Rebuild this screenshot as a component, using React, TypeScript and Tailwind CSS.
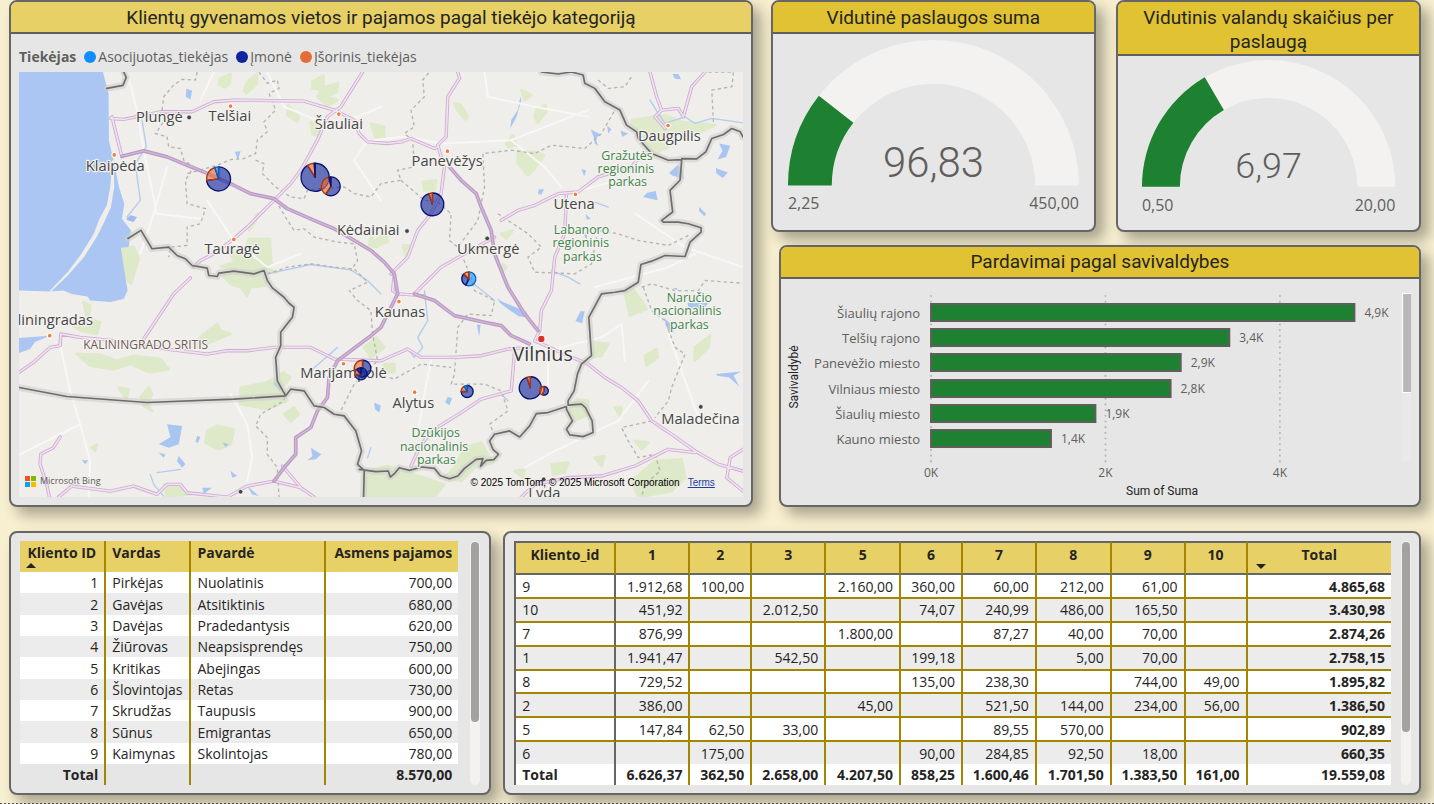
import type { ReactNode } from "react";

const UI = "font-['Open_Sans','Noto_Sans',sans-serif]";
const DIN = "font-['Roboto','Liberation_Sans',sans-serif]";

const BLUE = "#118dff";
const NAVY = "#12239e";
const ORANGE = "#e66c37";

function Card({ title, titleClass = "", className = "", children }: {
  title?: string;
  titleClass?: string;
  className?: string;
  children: ReactNode;
}) {
  return (
    <section
      className={`flex min-w-0 flex-col overflow-hidden rounded-lg border-2 border-[#666666] bg-[#e6e6e6] shadow-[8px_8px_14px_rgba(0,0,0,0.32)] ${className}`}
    >
      {title && (
        <h2 className={`${DIN} border-b-2 border-[#5f5f5f] px-5 text-center text-[19px] leading-6 text-[#252423] ${titleClass}`}>
          {title}
        </h2>
      )}
      {children}
    </section>
  );
}

/* ---------- map ---------- */

function point(x: number, y: number, r: number, t: number) {
  const a = 2 * Math.PI * t;
  return `${(x + r * Math.sin(a)).toFixed(2)} ${(y - r * Math.cos(a)).toFixed(2)}`;
}

function Pie({ x, y, r, parts }: { x: number; y: number; r: number; parts: [string, number][] }) {
  let start = 0;
  return (
    <g strokeWidth="4" strokeLinejoin="round">
      {parts.map(([color, share], i) => {
        const from = start;
        start += share;
        const stroke = color === ORANGE ? "#a8350c" : color === BLUE ? "#075fc0" : "#0a1470";
        return (
          <path
            key={i}
            d={`M${x} ${y}L${point(x, y, r, from)}A${r} ${r} 0 ${share > 0.5 ? 1 : 0} 1 ${point(x, y, r, start)}Z`}
            fill={color}
            fillOpacity="0.62"
            stroke={stroke}
          />
        );
      })}
    </g>
  );
}

const pies: { x: number; y: number; r: number; parts: [string, number][] }[] = [
  { x: 654, y: 536, r: 36, parts: [[NAVY, 0.73], [ORANGE, 0.22], [BLUE, 0.05]] },
  { x: 943, y: 531, r: 42, parts: [[NAVY, 0.91], [ORANGE, 0.08], [NAVY, 0.01]] },
  { x: 990, y: 558, r: 28, parts: [[NAVY, 0.59], [ORANGE, 0.38], [NAVY, 0.03]] },
  { x: 1294, y: 612, r: 34, parts: [[NAVY, 0.95], [ORANGE, 0.05]] },
  { x: 1403, y: 835, r: 21, parts: [[BLUE, 0.57], [NAVY, 0.3], [ORANGE, 0.13]] },
  { x: 1085, y: 1103, r: 25, parts: [[NAVY, 0.54], [BLUE, 0.18], [ORANGE, 0.28]] },
  { x: 1080, y: 1119, r: 18, parts: [[NAVY, 0.7], [ORANGE, 0.18], [NAVY, 0.12]] },
  { x: 1398, y: 1172, r: 18, parts: [[NAVY, 0.75], [ORANGE, 0.17], [BLUE, 0.08]] },
  { x: 1587, y: 1161, r: 33, parts: [[NAVY, 0.95], [ORANGE, 0.05]] },
  { x: 1628, y: 1170, r: 13, parts: [[NAVY, 0.56], [ORANGE, 0.44]] },
];

const forests =
  "M660 235L690 222L688 250L672 262L655 252ZM740 245L768 222L770 250L738 280L730 270ZM935 245L968 226L968 262L1012 250L1008 275L975 290L1010 300L980 318L950 290L962 270L935 265ZM862 315L895 350L890 365L860 345ZM930 365L962 378L955 410L935 400ZM362 745L400 740L415 775L392 850L370 825ZM690 762L735 740L745 715L808 715L812 790L790 800L830 815L730 810L660 798L705 785ZM770 640L745 690L765 665ZM660 820L780 820L795 855L750 860L740 885L720 860L690 850ZM220 975L262 955L250 905L270 915L265 955L300 965L290 1000L240 990ZM580 1030L610 1000L650 970L660 990L690 1000L640 1020L590 1040ZM230 1060L300 1062L350 1080L400 1065L480 1075L505 1105L450 1115L390 1090L340 1105L270 1095ZM720 1160L800 1145L850 1115L868 1130L840 1170L860 1200L800 1225L720 1210ZM355 1160L385 1165L378 1195ZM420 1190L445 1160L455 1180L440 1210L455 1230L430 1215ZM620 1290L650 1275L700 1285L690 1330L655 1345L615 1325ZM850 1240L880 1220L893 1240L870 1262ZM275 1340L290 1330L285 1350ZM490 1450L540 1460L570 1480L500 1485Z" +
  "M1360 310L1380 315L1400 350L1392 358L1368 330ZM1605 330L1632 315L1635 335L1610 368L1600 350ZM1515 430L1535 405L1545 435L1520 440ZM1560 270L1590 285L1570 300ZM1550 455L1600 455L1628 465L1600 505L1580 525L1550 490ZM1265 545L1305 540L1300 570L1270 570ZM1110 370L1150 380L1150 410L1125 415ZM1920 365L1990 345L2040 365L2140 375L2090 400L2020 395L2000 440L1960 460L1930 430ZM1890 360L1960 350L1945 395L1895 390ZM1125 720L1155 690L1160 725L1130 735ZM1205 735L1225 735L1215 770ZM1500 700L1535 690L1515 715ZM1110 705L1130 740L1105 735ZM1505 790L1515 800L1505 812ZM1870 880L1890 860L1920 900L1935 925L1885 945ZM1780 1025L1820 1030L1800 1065L1770 1070ZM1930 1065L1965 1045L1968 1070L1935 1095ZM2080 1040L2125 1005L2120 1040L2090 1070L2078 1080ZM1090 1040L1125 1010L1150 1040L1110 1070ZM1150 1090L1180 1090L1180 1115L1150 1115ZM1725 1195L1760 1200L1760 1240L1720 1260L1700 1230ZM1840 1220L1860 1220L1855 1245ZM1900 1320L1940 1325L1920 1345ZM1390 1340L1440 1325L1475 1385L1420 1400L1380 1440L1330 1430L1360 1400ZM1090 1410L1160 1395L1270 1430L1330 1450L1300 1488L1090 1488ZM1650 1390L1700 1385L1690 1415L1655 1420ZM1780 1370L1810 1365L1800 1395ZM1960 1380L2040 1375L2050 1430L2010 1470L1910 1488L1890 1440ZM1540 1410L1570 1405L1565 1430Z";

const lakes =
  "M558 265L575 272L570 298L556 290ZM703 455L720 453L712 480ZM500 1270L545 1275L535 1330L505 1340L475 1330L510 1308ZM535 1365L555 1390L545 1400L530 1380ZM590 1305L600 1308L592 1326L585 1322ZM665 1325L685 1330L675 1338ZM690 1410L710 1425L695 1430ZM930 1340L962 1360L945 1375L920 1378L935 1365ZM245 1378L264 1378L255 1390ZM605 1460L635 1460L610 1478ZM740 1455L775 1485L755 1480ZM1120 1205L1140 1215L1135 1235L1122 1225ZM475 1355L495 1360L490 1370ZM820 1140L842 1165L838 1170L820 1150Z" +
  "M1557 290L1560 300L1546 350L1527 385L1530 360L1550 330ZM1768 388L1796 402L1783 415L1790 438L1780 430L1776 408ZM1857 392L1881 400L1862 410ZM2152 430L2185 437L2173 470L2147 478L2162 452ZM2142 503L2178 517L2163 533L2144 520ZM2002 518L2028 494L2043 510L2046 536L2012 526ZM1937 577L1962 572L1968 600L1924 590ZM2092 620L2113 640L2108 648L2092 632ZM1740 507L1754 510L1748 528ZM1612 567L1628 567L1620 583L1610 580ZM1752 642L1768 655L1756 658ZM1747 702L1760 692L1755 718ZM1820 400L1830 387L1817 377ZM2012 222L2030 222L2038 238L2020 236ZM1487 892L1500 902L1548 922L1573 932L1586 952L1552 947L1522 927L1497 908ZM1722 962L1742 968L1750 932L1737 932ZM1427 972L1438 972L1434 1008ZM1340 1188L1353 1192L1345 1213L1332 1205ZM2012 862L2025 862L2030 870ZM2057 907L2118 907L2108 927L2080 922L2062 928ZM2142 1120L2218 1112L2195 1124L2213 1158L2182 1130L2147 1125ZM1987 952L2008 970L2018 998L1997 985Z";

const minorRoads =
  "M380 216L410 330L430 450L470 640L600 655M600 300L640 216M800 216L850 320L1000 380L1140 320M500 500L460 640L420 760M180 1030L210 1170L240 1270L270 1380L265 1488M690 1180L740 1270L755 1370L740 1440M60 1360L240 1270M620 600L700 720L800 800L900 760M1120 420L1200 410L1330 430L1530 420L1760 330M1450 216L1460 290L1600 320L1760 350M1530 420L1630 500L1680 560M1700 580L1850 540M1140 600L1060 480L1100 420M1640 1170L1640 1050L1800 1010L1860 970L1870 1080M1250 1300L1270 1180L1290 1080M1780 860L2000 800L2080 760M1570 1400L1660 1350L1850 1260L1940 1140M2000 1000L2090 1250L2223 1270M1900 640L2050 740L2223 800";

const regions =
  "M590 216L585 240L545 238L520 255L490 290L485 330L500 345L480 380L465 400L500 410L505 440L540 445L550 480L580 500L555 540L560 610L615 625L600 670L560 680L560 735L510 740L505 770M775 216L800 250L830 240L835 265L805 280L825 330L790 365L800 395L770 420L765 460L730 475L690 478L650 495L560 520M765 480L790 490L785 520L825 560L870 590L910 595L920 570L960 565L1030 560L1060 580L1110 590L1140 550L1200 540L1190 510L1240 500L1235 420L1210 400L1240 380L1230 330L1270 290L1265 240L1285 216M825 600L860 660L880 690L910 685L940 710L1010 725L1060 730L1070 780L1050 810M800 820L860 800L930 790L1000 800L1060 805L1100 845L1045 870L1070 900L1110 930L1115 1000L1130 1080L1060 1150L1020 1230M855 1170L850 1200L780 1240L765 1275L800 1310L800 1360L830 1400L835 1488" +
  "M1200 540L1270 600L1310 605L1350 640L1345 720L1370 740L1400 700L1430 660L1450 560L1445 460L1530 450L1600 460L1650 435L1750 445L1800 400L1840 330M1490 640L1580 700L1620 740L1580 770L1600 815L1720 820L1770 790L1790 690L1850 700L1910 720L2000 735L2060 705M1380 760L1410 830L1420 870L1480 900L1470 945L1400 940L1370 980L1360 1120L1350 1150L1450 1150L1500 1170L1520 1230L1465 1270L1480 1300M1130 1120L1180 1135L1260 1090L1350 1100M1920 860L1950 850L2020 870L2090 870L2110 840L2223 848M1925 860L1950 930L1990 960L2020 1040L2050 1060L2010 1160L2000 1200L1960 1250M1950 1260L1860 1280L1880 1320L1910 1370L1960 1360L1975 1410L1930 1450L1920 1488M1790 240L1820 265L1870 260L1890 230M2120 216L2195 216L2190 260L2130 270L2135 370";

const streams =
  "M425 360L438 440L405 490L420 600L380 650M800 820L930 792L1050 808L1100 840L1140 880M930 1110L1010 1040M1270 870L1280 960L1250 1010L1265 1040L1240 1070L1225 1050M1380 820L1430 860L1480 900M1650 810L1700 830L1735 850M1500 1180L1520 1200M450 1420L460 1450L490 1485M470 1415L540 1405M1110 1340L1100 1370M1780 605L1820 620M1945 300L1970 340L1990 370L2050 350L2080 370L2130 355L2223 368";

const roads =
  "M57 1115L100 1085L150 1040L180 1035L182 1000L240 1010L340 1020L430 1030L500 1045L620 1060L680 1050L740 1050L820 1040L930 1040L1000 1075L1140 1080L1220 1045L1260 1070L1360 1070L1440 1065L1520 1045L1590 1040M430 1015L450 985L520 880L570 832M180 1308L160 1340L122 1360L120 1390L140 1450L148 1488M175 1488L215 1455L330 1470L400 1455L470 1480L500 1450L540 1450L560 1475L680 1488L740 1455L820 1440L900 1460L940 1488M845 1395L905 1465M335 350L365 470M330 355L370 358L480 335L575 335L640 305L700 300L910 303L1000 330M1085 216L1020 320L980 350L950 420L900 510L870 550L820 600L780 640L740 680L700 715L640 760L600 780L580 800M1000 330L1060 360L1075 400L1100 425L1160 430L1200 425L1230 415L1300 445L1310 440" +
  "M1370 216L1375 235L1340 290L1335 410L1310 435L1330 500L1320 580L1290 640L1250 690L1220 770L1170 820M1500 660L1550 630L1600 615L1670 580L1730 575L1790 530L1890 500L1910 475M1695 585L1690 700L1660 770L1650 870L1620 930L1615 990L1600 1020M1945 216L1965 290L1980 330L1960 350L1990 385M1980 330L2030 325L2045 350L2070 260L2110 216M1480 710L1390 760L1320 800L1280 840L1240 880M1180 820L1175 870L1190 880L1270 885M1540 1050L1530 1170L1440 1195L1380 1235L1300 1285L1260 1330L1230 1395M1600 1020L1700 1065L1760 1090L1810 1130L1860 1160L1910 1200L1950 1260L2010 1300L2080 1350L2150 1390L2223 1410M2223 1345L2185 1370L2175 1430L2223 1470M1560 1488L1600 1450L1700 1430L1800 1425L1900 1395L1960 1365L2000 1345L2080 1355";

const motorways =
  "M365 468L430 452L500 470L560 495L610 515L700 555L750 580L820 595L860 625L940 660L1000 685L1060 720L1110 750L1150 785L1180 820L1190 880M1240 880L1300 900L1360 945L1450 965L1500 975L1530 1005L1585 1030M1345 500L1380 540L1425 580L1440 620L1470 690L1480 760L1520 860L1570 940L1610 990M1190 880L1140 980L1110 1005L1050 1050L1010 1080L985 1130L980 1190L950 1230L930 1280L885 1310L885 1360L850 1400L820 1440";

const borders =
  "M320 265L368 256L378 232L370 216M383 714L422 690L455 745L505 740L530 765L555 775L575 795L620 803L625 825L650 828L655 818L700 812L760 820L790 810L800 840L815 862L850 890L865 908L880 920L875 950L840 995L840 1035L825 1070L830 1140L855 1185L700 1195L440 1205L200 1187L57 1160M855 1185L870 1165L910 1170L940 1215L970 1220L1000 1240L1030 1245L1065 1290L1082 1350L1070 1390L1090 1408L1088 1488M1075 1405L1125 1412L1162 1410L1168 1428L1182 1416L1195 1400L1225 1408L1262 1398L1300 1402L1318 1424L1345 1433L1370 1425L1390 1402L1425 1375L1445 1373L1438 1396L1455 1378L1478 1376L1492 1360L1475 1345L1465 1320L1480 1300L1525 1290L1555 1308L1585 1275L1605 1238L1640 1235L1695 1217L1695 1225L1713 1260L1695 1285L1705 1302L1745 1307L1775 1295L1772 1260L1752 1220L1740 1210L1700 1213L1700 1200L1718 1170L1728 1120L1740 1090L1770 1065L1762 950L1800 880L1840 875L1870 870L1910 845L1918 792L1950 782L1990 765L2050 768L2065 725L2098 695L2098 682L2060 670L2030 665L1985 665L1980 660L2013 635L2005 570L2035 540L2040 478L2000 480L1950 460L1910 415L1905 395L1875 375L1855 330L1810 305L1780 265L1750 250L1745 225L1710 216L1670 222L1620 216M2040 475L2085 476L2112 455L2130 415L2165 403L2190 385L2215 395L2223 410";

const places: [string, number, number, number, string][] = [
  ["Plungė", 477, 366, 44, "#464646"],
  ["Telšiai", 688, 362, 44, "#464646"],
  ["Šiauliai", 1014, 388, 44, "#464646"],
  ["Klaipėda", 345, 511, 44, "#464646"],
  ["Panevėžys", 1338, 497, 44, "#464646"],
  ["Daugpilis", 2003, 422, 44, "#464646"],
  ["Utena", 1718, 625, 44, "#464646"],
  ["Kėdainiai", 1102, 703, 44, "#464646"],
  ["Tauragė", 695, 761, 44, "#464646"],
  ["Ukmergė", 1461, 761, 44, "#464646"],
  ["Kaunas", 1197, 950, 44, "#464646"],
  ["Kaliningradas", 140, 974, 44, "#464646"],
  ["Marijampolė", 1028, 1133, 44, "#464646"],
  ["Alytus", 1237, 1221, 44, "#464646"],
  ["Maladečina", 2096, 1268, 44, "#464646"],
  ["Lyda", 1629, 1490, 44, "#464646"],
  ["Vilnius", 1624, 1081, 59, "#3a3a3a"],
  ["KALININGRADO SRITIS", 436, 1044, 36, "#6f5a5a"],
  ["Gražutės", 1876, 478, 37, "#41834b"],
  ["regioninis", 1873, 518, 37, "#41834b"],
  ["parkas", 1878, 558, 37, "#41834b"],
  ["Labanoro", 1740, 700, 37, "#41834b"],
  ["regioninis", 1738, 740, 37, "#41834b"],
  ["parkas", 1743, 781, 37, "#41834b"],
  ["Naručio", 2063, 903, 37, "#41834b"],
  ["nacionalinis", 2057, 944, 37, "#41834b"],
  ["parkas", 2063, 984, 37, "#41834b"],
  ["Dzūkijos", 1304, 1309, 37, "#41834b"],
  ["nacionalinis", 1299, 1349, 37, "#41834b"],
  ["parkas", 1306, 1390, 37, "#41834b"],
];

const towns = [[690, 318], [1014, 342], [342, 464], [1339, 453], [1999, 376], [1722, 582], [700, 717], [1194, 903], [149, 1005], [1028, 1089], [1241, 1174]];
const smallTowns = [[566, 352], [1218, 692], [1458, 714], [2097, 1218], [720, 1472], [1627, 1435]];

function LithuaniaMap() {
  return (
    <div className="relative">
      <svg viewBox="57 216 2166 1272" className="block h-auto w-full" role="img" aria-label="Klientų žemėlapis">
        <rect x="57" y="216" width="2166" height="1272" fill="#efeeea" />
        <path d={forests} fill="#dbe9c3" stroke="#dbe9c3" strokeWidth="8" strokeLinejoin="round" opacity="0.8" />
        <path
          d="M57 216H308L325 280L326 420L342 490L356 560L372 610L365 655L392 690L385 740L362 742L372 810L382 870L370 895L330 904L270 900L262 888L215 880L190 870L150 873L57 870ZM57 1012L150 1005L105 1024L90 1045L57 1057Z"
          fill="#abc6f2"
        />
        <path d="M378 655L390 645L410 650L400 665L383 660Z" fill="#9dbcf0" />
        <path d="M338 480L340 560L330 620L312 660L290 705L250 768L200 825L150 873L205 815L245 762L283 700L300 655L322 615L332 560Z" fill="#efeeea" stroke="#efeeea" strokeWidth="4" />
        <path d={lakes} fill="#a9c6f2" />
        <g fill="none" strokeLinejoin="round" strokeLinecap="round">
          <path d={minorRoads} stroke="#f8f7f5" strokeWidth="6" />
          <path d={streams} stroke="#b3cbee" strokeWidth="4" />
          <path d={regions} stroke="#b4b4b0" strokeWidth="4" strokeDasharray="10 9" strokeLinecap="butt" />
          <path d={roads} stroke="#cfa9d3" strokeWidth="10" />
          <path d={roads} stroke="#efe3f0" strokeWidth="5" />
          <path d={motorways} stroke="#bd98c6" strokeWidth="11" />
          <path d={motorways} stroke="#cdb9d4" strokeWidth="4" />
          <path d={borders} stroke="#cfcfca" strokeWidth="20" opacity="0.6" />
          <path d={borders} stroke="#6c6c6c" strokeWidth="5" />
        </g>
        {towns.map(([x, y]) => (
          <circle key={`${x}-${y}`} cx={x} cy={y} r="7" fill="#f47b3c" stroke="#ffffff" strokeWidth="3" />
        ))}
        {smallTowns.map(([x, y]) => (
          <circle key={`${x}-${y}`} cx={x} cy={y} r="7" fill="#444444" stroke="#ffffff" strokeWidth="2" />
        ))}
        <circle cx="1620" cy="1015" r="11" fill="#d9302a" stroke="#ffffff" strokeWidth="3" />
        <g textAnchor="middle" stroke="#f4f3f0" strokeWidth="7" paintOrder="stroke" strokeLinejoin="round">
          {places.map(([name, x, y, size, fill], i) => (
            <text key={i} x={x} y={y} fontSize={size} fill={fill} className="font-medium">
              {name}
            </text>
          ))}
        </g>
        {pies.map((p, i) => (
          <Pie key={i} {...p} />
        ))}
      </svg>
      <div className="absolute bottom-2 left-1.5 flex items-center gap-1 text-[9px] leading-4 text-[#5a5a5a]">
        <svg viewBox="0 0 11 11" className="h-[11px] w-[11px]" aria-hidden="true">
          <path d="M0 0h5v5H0z" fill="#f25022" />
          <path d="M6 0h5v5H6z" fill="#7fba00" />
          <path d="M0 6h5v5H0z" fill="#00a4ef" />
          <path d="M6 6h5v5H6z" fill="#ffb900" />
        </svg>
        Microsoft Bing
      </div>
      <div className="absolute right-7 bottom-1.5 flex gap-2 font-['Liberation_Sans',sans-serif] text-[10px] leading-4 text-black">
        <span>© 2025 TomTom, © 2025 Microsoft Corporation</span>
        <a href="#terms" className="text-[#1f3fa0] underline">Terms</a>
      </div>
    </div>
  );
}

const legend: [string, string][] = [
  ["Asocijuotas_tiekėjas", "bg-[#118dff]"],
  ["Įmonė", "bg-[#12239e]"],
  ["Įšorinis_tiekėjas", "bg-[#e66c37]"],
];

/* ---------- gauges ---------- */

function arc(cx: number, cy: number, outer: number, inner: number, t: number) {
  const a = Math.PI * (1 - t);
  const c = Math.cos(a);
  const s = Math.sin(a);
  return `M${cx - outer} ${cy}A${outer} ${outer} 0 0 1 ${cx + outer * c} ${cy - outer * s}L${cx + inner * c} ${cy - inner * s}A${inner} ${inner} 0 0 0 ${cx - inner} ${cy}Z`;
}

function Gauge({ width, height, cy, outer, inner, value, min, max, label, size }: {
  width: number;
  height: number;
  cy: number;
  outer: number;
  inner: number;
  value: number;
  min: number;
  max: number;
  label: [string, string, string];
  size: number;
}) {
  const cx = width / 2;
  return (
    <svg viewBox={`0 0 ${width} ${height}`} className="block h-auto w-full" fill="#605e5c">
      <path d={arc(cx, cy, outer, inner, 1)} fill="#f3f2f1" />
      <path d={arc(cx, cy, outer, inner, (value - min) / (max - min))} fill="#1e8031" />
      <text x={cx} y={cy - 9} textAnchor="middle" fontSize={size} className={`${DIN} font-light`}>
        {label[0]}
      </text>
      <text x={cx - outer} y={cy + 24} fontSize="16">{label[1]}</text>
      <text x={cx + outer} y={cy + 24} textAnchor="end" fontSize="16">{label[2]}</text>
    </svg>
  );
}

/* ---------- bar chart ---------- */

const bars: [string, number, string][] = [
  ["Šiaulių rajono", 4865.68, "4,9K"],
  ["Telšių rajono", 3430.98, "3,4K"],
  ["Panevėžio miesto", 2874.26, "2,9K"],
  ["Vilniaus miesto", 2758.15, "2,8K"],
  ["Šiaulių miesto", 1895.82, "1,9K"],
  ["Kauno miesto", 1386.5, "1,4K"],
];

function BarChart() {
  const x0 = 150;
  const scale = 0.0872;
  return (
    <svg viewBox="0 0 638 226" className="block h-auto w-full" fontSize="13" fill="#605e5c">
      {[0, 2, 4].map((k) => (
        <g key={k}>
          <path d={`M${x0 + k * 1000 * scale} 17V184`} stroke="#b5b5b5" strokeWidth="2" strokeLinecap="round" strokeDasharray="0.1 5.6" />
          <text x={x0 + k * 1000 * scale} y="198" textAnchor="middle" fontSize="12">{k}K</text>
        </g>
      ))}
      {bars.map(([name, value, text], i) => {
        const y = 25 + Math.round(i * 25.2);
        return (
          <g key={name}>
            <text x={x0 - 11} y={y + 14} textAnchor="end">{name}</text>
            <rect x={x0} y={y} width={value * scale - 1} height="17" fill="#1e8031" stroke="#605e5c" strokeWidth="2" />
            <text x={x0 + value * scale + 9} y={y + 13} fontSize="12">{text}</text>
          </g>
        );
      })}
      <g fontSize="12" fill="#252423" textAnchor="middle">
        <text transform="translate(17 98) rotate(-90)" className={DIN}>Savivaldybė</text>
        <text x="381" y="216" className={DIN}>Sum of Suma</text>
      </g>
      <path d="M621 14h9v168h-9z" fill="#e9e9e9" />
      <path d="M621 14h9v100h-9z" fill="#ffffff" />
      <path d="M622 15h8v98h-8z" fill="#b8b8b8" />
    </svg>
  );
}

/* ---------- tables ---------- */

const clients = [
  ["1", "Pirkėjas", "Nuolatinis", "700,00"],
  ["2", "Gavėjas", "Atsitiktinis", "680,00"],
  ["3", "Davėjas", "Pradedantysis", "620,00"],
  ["4", "Žiūrovas", "Neapsisprendęs", "750,00"],
  ["5", "Kritikas", "Abejingas", "600,00"],
  ["6", "Šlovintojas", "Retas", "730,00"],
  ["7", "Skrudžas", "Taupusis", "900,00"],
  ["8", "Sūnus", "Emigrantas", "650,00"],
  ["9", "Kaimynas", "Skolintojas", "780,00"],
];

const matrixHead = ["Kliento_id", "1", "2", "3", "5", "6", "7", "8", "9", "10", "Total"];
const matrix = [
  ["9", "1.912,68", "100,00", "", "2.160,00", "360,00", "60,00", "212,00", "61,00", "", "4.865,68"],
  ["10", "451,92", "", "2.012,50", "", "74,07", "240,99", "486,00", "165,50", "", "3.430,98"],
  ["7", "876,99", "", "", "1.800,00", "", "87,27", "40,00", "70,00", "", "2.874,26"],
  ["1", "1.941,47", "", "542,50", "", "199,18", "", "5,00", "70,00", "", "2.758,15"],
  ["8", "729,52", "", "", "", "135,00", "238,30", "", "744,00", "49,00", "1.895,82"],
  ["2", "386,00", "", "", "45,00", "", "521,50", "144,00", "234,00", "56,00", "1.386,50"],
  ["5", "147,84", "62,50", "33,00", "", "", "89,55", "570,00", "", "", "902,89"],
  ["6", "", "175,00", "", "", "90,00", "284,85", "92,50", "18,00", "", "660,35"],
];
const matrixTotal = ["Total", "6.626,37", "362,50", "2.658,00", "4.207,50", "858,25", "1.600,46", "1.701,50", "1.383,50", "161,00", "19.559,08"];
const matrixCols = ["w-[100px]", "w-[75px]", "w-[62px]", "w-[74px]", "w-[75px]", "w-[62px]", "w-[74px]", "w-[75px]", "w-[74px]", "w-[62px]", "w-[145px]"];

function ScrollTrack({ thumb }: { thumb: string }) {
  return (
    <div className="w-[10px] shrink-0 rounded-full bg-[#f3f2f1] p-px">
      <div className={`w-full rounded-full bg-[#a3a2a0] ${thumb}`} />
    </div>
  );
}

function ClientTable() {
  const line = "border-r-2 border-[#a38500] last:border-r-0";
  return (
    <table className="h-[244px] min-w-0 flex-1 table-fixed border-separate border-spacing-0 text-sm leading-5 text-[#252423]">
      <colgroup>
        <col className="w-[86px]" />
        <col className="w-[85px]" />
        <col className="w-[134px]" />
        <col className="w-[132px]" />
      </colgroup>
      <thead>
        <tr className="h-[31px] bg-[#e7d166] align-top font-bold">
          <th scope="col" className={`${line} relative pt-0.5 pr-2 text-right whitespace-nowrap`}>
            Kliento ID
            <svg viewBox="0 0 10 5" className="absolute bottom-1 left-1.5 h-[5px] w-[10px]" aria-hidden="true">
              <path d="M0 5L5 0L10 5Z" fill="#252423" />
            </svg>
          </th>
          <th scope="col" className={`${line} px-1.5 pt-0.5 text-left`}>Vardas</th>
          <th scope="col" className={`${line} px-1.5 pt-0.5 text-left`}>Pavardė</th>
          <th scope="col" className={`${line} px-1.5 pt-0.5 text-right whitespace-nowrap`}>Asmens pajamos</th>
        </tr>
      </thead>
      <tbody>
        {clients.map((row) => (
          <tr key={row[0]} className="odd:bg-white even:bg-[#ececec]">
            {row.map((cell, i) => (
              <td key={i} className={`${line} px-1.5 pt-px pb-0 ${i === 0 || i === 3 ? "text-right" : ""}`}>{cell}</td>
            ))}
          </tr>
        ))}
      </tbody>
      <tfoot>
        <tr className="h-[21px] font-bold">
          <td className={`${line} px-1.5 text-right`}>Total</td>
          <td className={line} />
          <td className={line} />
          <td className={`${line} px-1.5 text-right`}>8.570,00</td>
        </tr>
      </tfoot>
    </table>
  );
}

function MatrixTable() {
  const side = (i: number) =>
    i === 0 ? "border-r-2 border-r-[#666666]" : i === 10 ? "" : "border-r-2 border-r-[#a38500]";
  return (
    <table className="h-[244px] min-w-0 flex-1 table-fixed border-separate border-spacing-0 border-l-2 border-[#666666] text-sm leading-5 text-[#252423]">
      <colgroup>
        {matrixCols.map((c, i) => (
          <col key={i} className={c} />
        ))}
      </colgroup>
      <thead>
        <tr className="h-[34px] bg-[#e7d166] align-top">
          {matrixHead.map((h, i) => (
            <th
              key={h}
              scope="col"
              className={`relative border-t-2 border-b-2 border-y-[#666666] pt-0.5 font-bold ${i < 10 ? "border-r-2 border-r-[#a38500]" : ""}`}
            >
              {h}
              {i === 10 && (
                <svg viewBox="0 0 10 5" className="absolute bottom-1 left-2 h-[5px] w-[10px]" aria-hidden="true">
                  <path d="M0 0L5 5L10 0Z" fill="#252423" />
                </svg>
              )}
            </th>
          ))}
        </tr>
      </thead>
      <tbody>
        {matrix.map((row, r) => (
          <tr key={row[0]} className="odd:bg-white even:bg-[#ececec]">
            {row.map((cell, i) => (
              <td
                key={i}
                className={`px-1.5 pt-px pb-0 ${side(i)} ${r < 7 ? "border-b-2 border-b-[#a38500]" : ""} ${i > 0 ? "text-right" : ""} ${i === 10 ? "font-bold" : ""}`}
              >
                {cell}
              </td>
            ))}
          </tr>
        ))}
      </tbody>
      <tfoot>
        <tr className="h-[21px] bg-white font-bold">
          {matrixTotal.map((cell, i) => (
            <td key={i} className={`px-1.5 py-0 ${side(i)} ${i > 0 ? "text-right" : ""}`}>{cell}</td>
          ))}
        </tr>
      </tfoot>
    </table>
  );
}

export default function App() {
  return (
    <main className={`${UI} min-h-screen overflow-hidden bg-[#f8efd0]`}>
      <div className="flex gap-[18px] pr-[13px] pl-[9px]">
        <Card title="Klientų gyvenamos vietos ir pajamos pagal tiekėjo kategoriją" titleClass="bg-[#e7d166] pt-1 pb-0.5" className="flex-[742]">
          <div className="flex flex-1 flex-col px-2 pt-3 pb-2">
            <div className="mb-1 flex h-[22px] items-center gap-2 text-sm text-[#605e5c]">
              <span className="font-bold">Tiekėjas</span>
              {legend.map(([name, dot]) => (
                <span key={name} className="flex items-center gap-0.5">
                  <span className={`h-3 w-3 rounded-full ${dot}`} />
                  {name}
                </span>
              ))}
            </div>
            <LithuaniaMap />
          </div>
        </Card>
        <div className="flex min-w-0 flex-[652] flex-col gap-[13px]">
          <div className="flex gap-5">
            <Card title="Vidutinė paslaugos suma" titleClass="bg-[#e1c233] pt-1 pb-0.5" className="flex-[326]">
              <Gauge width={322} height={195} cy={152} outer={146} inner={102} value={96.83} min={2.25} max={450} label={["96,83", "2,25", "450,00"]} size={42} />
            </Card>
            <Card title="Vidutinis valandų skaičius per paslaugą" titleClass="bg-[#e1c233] pt-1" className="flex-[306]">
              <Gauge width={302} height={174} cy={131} outer={127} inner={89} value={6.97} min={0.5} max={20} label={["6,97", "0,50", "20,00"]} size={36} />
            </Card>
          </div>
          <Card title="Pardavimai pagal savivaldybes" titleClass="bg-[#e1c233] pt-[3px] pb-[3px]" className="ml-2 flex-1">
            <BarChart />
          </Card>
        </div>
      </div>
      <div className="mt-6 flex gap-3 pr-[13px] pl-[9px]">
        <Card className="flex-[481]">
          <div className="flex gap-3 px-[9px] py-2">
            <ClientTable />
            <ScrollTrack thumb="h-[180px]" />
          </div>
        </Card>
        <Card className="flex-[919]">
          <div className="flex gap-[10px] py-2 pr-2 pl-[9px]">
            <MatrixTable />
            <ScrollTrack thumb="h-[190px]" />
          </div>
        </Card>
      </div>
      <div className="mt-2 h-0.5 bg-[repeating-linear-gradient(90deg,#555555_0px,#555555_2px,#f3f0e4_2px,#f3f0e4_4px)]" />
    </main>
  );
}
